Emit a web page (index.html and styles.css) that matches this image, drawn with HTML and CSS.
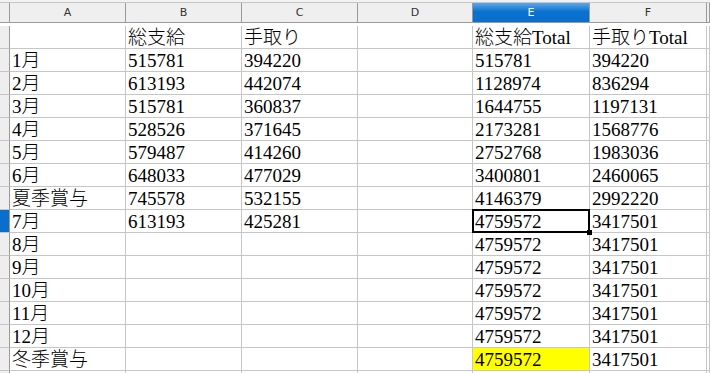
FILE: index.html
```html
<!DOCTYPE html>
<html lang="ja">
<head>
  <meta charset="UTF-8" />
  <title>給与集計</title>
  <link rel="stylesheet" href="styles.css">
</head>
<body>

  <div class="topbar"></div>

  <!-- Sheet grid -->
  <div class="sheet">
    <div class="colhead corner"></div>
    <div class="colhead">A</div>
    <div class="colhead">B</div>
    <div class="colhead">C</div>
    <div class="colhead">D</div>
    <div class="colhead active">E</div>
    <div class="colhead">F</div>
    <div class="colhead"></div>

    <div class="rowhead"></div><div class="cell"></div><div class="cell">総支給</div><div class="cell">手取り</div><div class="cell"></div><div class="cell">総支給Total</div><div class="cell">手取りTotal</div><div class="cell"></div>
    <div class="rowhead"></div><div class="cell">1月</div><div class="cell">515781</div><div class="cell">394220</div><div class="cell"></div><div class="cell">515781</div><div class="cell">394220</div><div class="cell"></div>
    <div class="rowhead"></div><div class="cell">2月</div><div class="cell">613193</div><div class="cell">442074</div><div class="cell"></div><div class="cell">1128974</div><div class="cell">836294</div><div class="cell"></div>
    <div class="rowhead"></div><div class="cell">3月</div><div class="cell">515781</div><div class="cell">360837</div><div class="cell"></div><div class="cell">1644755</div><div class="cell">1197131</div><div class="cell"></div>
    <div class="rowhead"></div><div class="cell">4月</div><div class="cell">528526</div><div class="cell">371645</div><div class="cell"></div><div class="cell">2173281</div><div class="cell">1568776</div><div class="cell"></div>
    <div class="rowhead"></div><div class="cell">5月</div><div class="cell">579487</div><div class="cell">414260</div><div class="cell"></div><div class="cell">2752768</div><div class="cell">1983036</div><div class="cell"></div>
    <div class="rowhead"></div><div class="cell">6月</div><div class="cell">648033</div><div class="cell">477029</div><div class="cell"></div><div class="cell">3400801</div><div class="cell">2460065</div><div class="cell"></div>
    <div class="rowhead"></div><div class="cell">夏季賞与</div><div class="cell">745578</div><div class="cell">532155</div><div class="cell"></div><div class="cell">4146379</div><div class="cell">2992220</div><div class="cell"></div>
    <div class="rowhead active"></div><div class="cell">7月</div><div class="cell">613193</div><div class="cell">425281</div><div class="cell"></div><div class="cell current">4759572</div><div class="cell">3417501</div><div class="cell"></div>
    <div class="rowhead"></div><div class="cell">8月</div><div class="cell"></div><div class="cell"></div><div class="cell"></div><div class="cell">4759572</div><div class="cell">3417501</div><div class="cell"></div>
    <div class="rowhead"></div><div class="cell">9月</div><div class="cell"></div><div class="cell"></div><div class="cell"></div><div class="cell">4759572</div><div class="cell">3417501</div><div class="cell"></div>
    <div class="rowhead"></div><div class="cell">10月</div><div class="cell"></div><div class="cell"></div><div class="cell"></div><div class="cell">4759572</div><div class="cell">3417501</div><div class="cell"></div>
    <div class="rowhead"></div><div class="cell">11月</div><div class="cell"></div><div class="cell"></div><div class="cell"></div><div class="cell">4759572</div><div class="cell">3417501</div><div class="cell"></div>
    <div class="rowhead"></div><div class="cell">12月</div><div class="cell"></div><div class="cell"></div><div class="cell"></div><div class="cell">4759572</div><div class="cell">3417501</div><div class="cell"></div>
    <div class="rowhead"></div><div class="cell">冬季賞与</div><div class="cell"></div><div class="cell"></div><div class="cell"></div><div class="cell highlight">4759572</div><div class="cell">3417501</div><div class="cell"></div>
    <div class="rowhead"></div><div class="cell"></div><div class="cell"></div><div class="cell"></div><div class="cell"></div><div class="cell"></div><div class="cell"></div><div class="cell"></div>
  </div>

</body>
</html>
```

FILE: styles.css
```css
html, body {
  height: 100%;
}
body {
  margin: 0;
  background: #fff;
  overflow: hidden;
  font-family: "Liberation Serif", "Noto Sans CJK JP", serif;
}
.topbar {
  height: 2px;
  background: #f2f2f2;
  border-bottom: 1px solid #c6c6c6;
}
.sheet {
  display: grid;
  grid-template-columns: 10px 116px 116px 116px 115px 117px 117px 1fr;
  grid-auto-rows: 23px;
}
.colhead {
  height: 19px;
  background: #efefef;
  border-right: 1px solid #9a9a9a;
  border-bottom: 1px solid #9a9a9a;
  font-family: "DejaVu Sans", sans-serif;
  font-size: 11px;
  line-height: 19px;
  color: #333;
  text-align: center;
}
.colhead.corner {
  background: #eeeeee;
}
.colhead.active {
  background: linear-gradient(#5ca8e8, #0c72cf 45%, #0a6fcc);
  color: #fff;
}
.rowhead {
  background: #eeeeee;
  border-right: 1px solid #9a9a9a;
  border-bottom: 1px solid #c6c6c6;
}
.rowhead.active {
  background: #0a6fcc;
}
.cell {
  position: relative;
  border-right: 1px solid #c6c6c6;
  border-bottom: 1px solid #c6c6c6;
  padding: 2px 0 0 2px;
  font-size: 19px;
  font-weight: 300;
  line-height: 20px;
  color: #000;
  white-space: nowrap;
}
.cell.highlight {
  background: #ffff00;
}
/* cursor frame with fill handle */
.cell.current::after {
  content: "";
  position: absolute;
  left: -1px;
  top: -1px;
  right: -1px;
  bottom: -1px;
  border: 2px solid #000;
}
.cell.current::before {
  content: "";
  position: absolute;
  right: -3px;
  bottom: -3px;
  width: 5px;
  height: 5px;
  background: #000;
  z-index: 1;
}
```
